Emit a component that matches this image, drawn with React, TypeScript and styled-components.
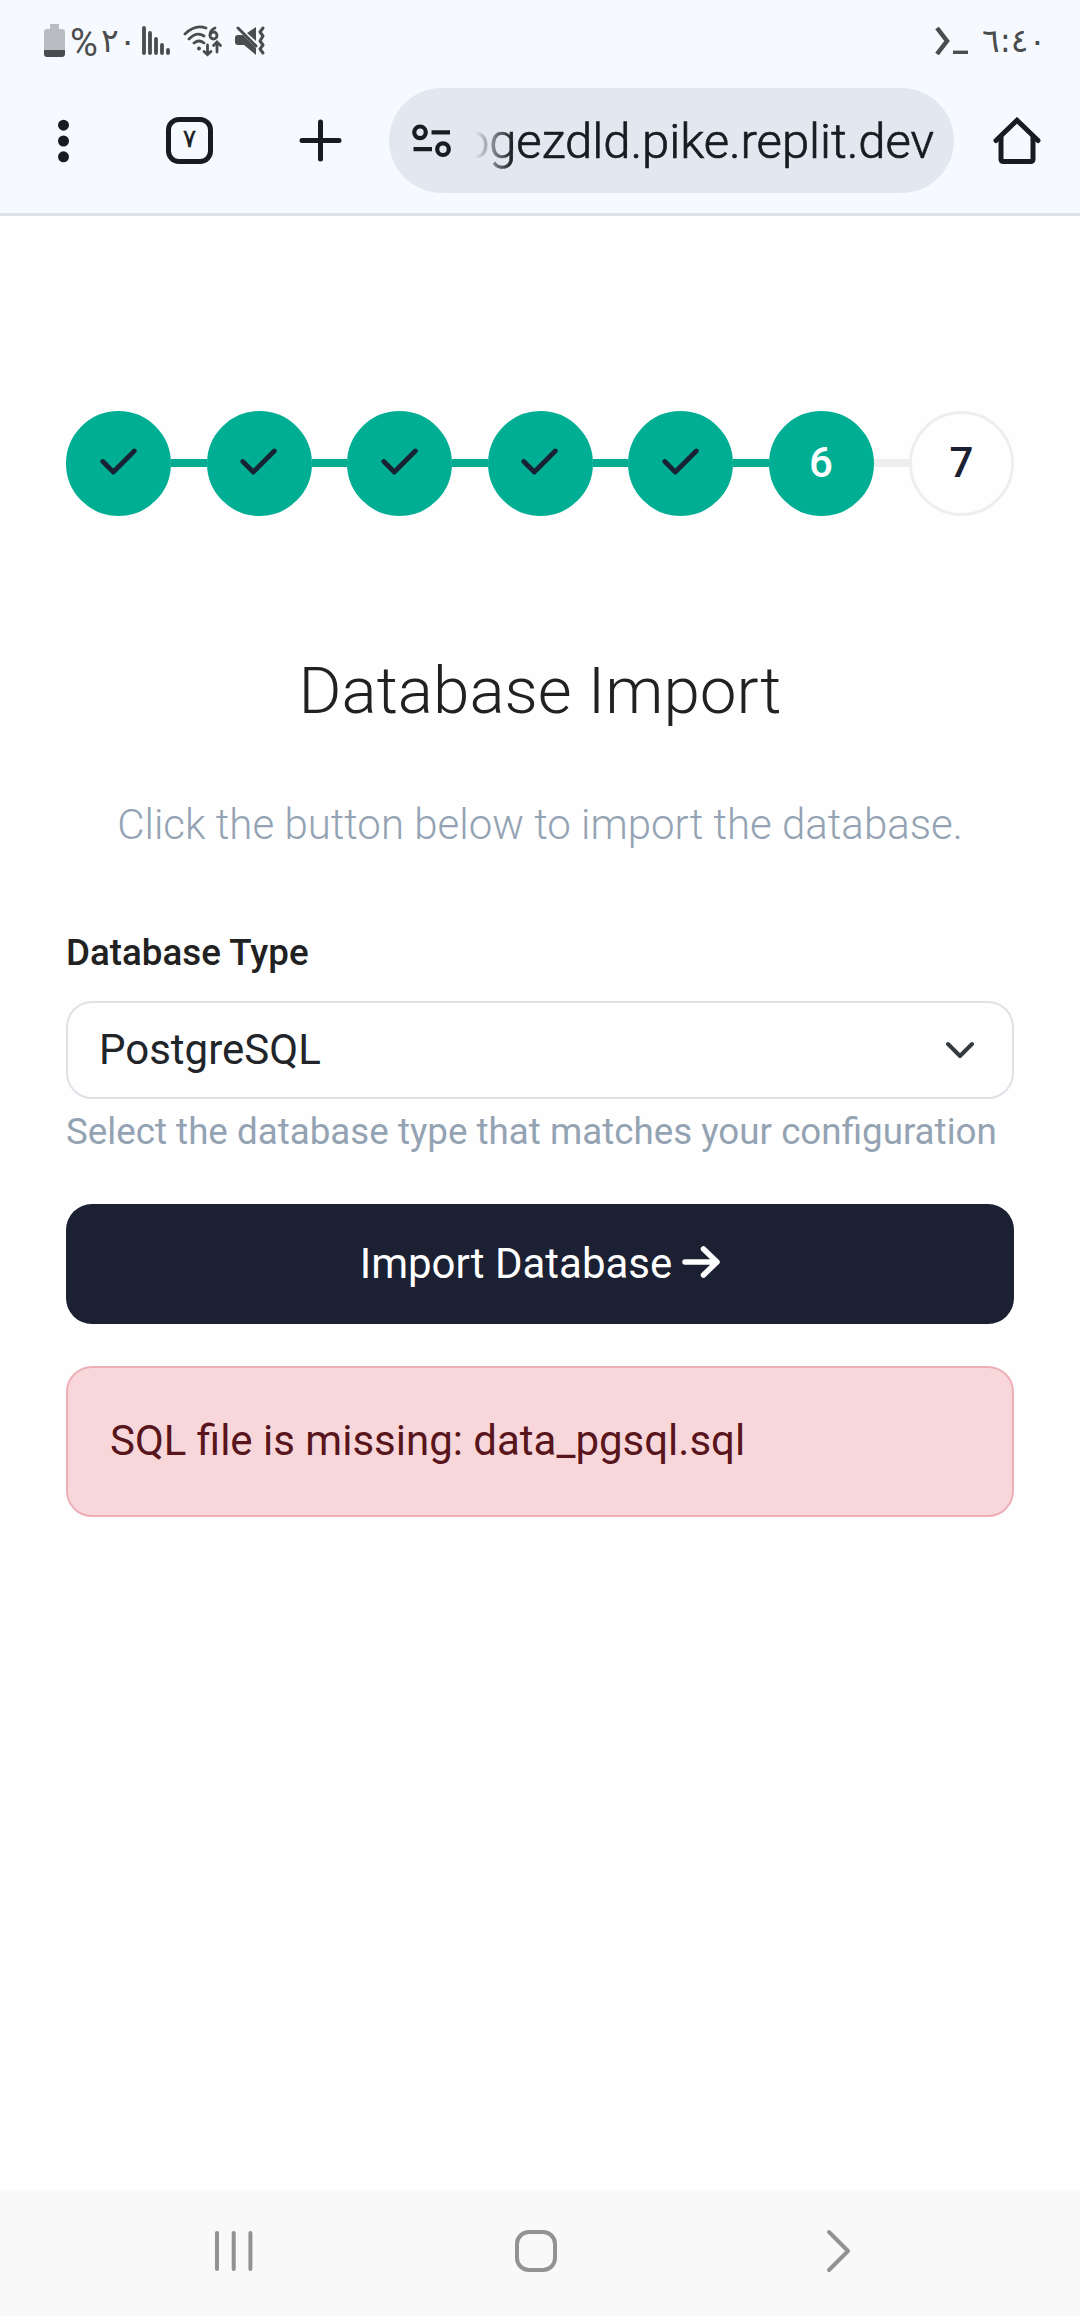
import React from "react";
import styled, { createGlobalStyle } from "styled-components";

const GlobalStyle = createGlobalStyle`
  *, *::before, *::after { box-sizing: border-box; }
  body { margin: 0; background: #fefefe; font-family: Roboto, "Liberation Sans", sans-serif; }
  h1, p { margin: 0; }
  svg { display: block; flex: none; }
`;

const Screen = styled.div`
  display: flex;
  flex-direction: column;
  width: 1080px;
  height: 2316px;
  overflow: hidden;
`;

const Header = styled.header`
  flex: none;
  height: 216px;
  background: #f6faff;
  border-bottom: 3px solid #dde3ea;
`;

const StatusBar = styled.div`
  display: flex;
  align-items: center;
  height: 82px;
  padding: 0 45px 0 44px;
  color: #4b4c4e;
`;

const StatusGroup = styled.div<{ $end?: boolean; $gap?: number; $indent?: number }>`
  display: flex;
  align-items: center;
  gap: ${(p) => p.$gap ?? 0}px;
  margin-left: ${(p) => (p.$end ? "auto" : `${p.$indent ?? 0}px`)};
`;

const Percent = styled.span`
  width: 31px;
  margin-left: 4px;
  padding-top: 3px;
  font-size: 38px;
  font-weight: 400;
  line-height: 40px;
`;

const Digits = styled.span<{ $width: number; $indent?: number }>`
  width: ${(p) => p.$width}px;
  padding-left: ${(p) => p.$indent ?? 0}px;
  font-family: "DejaVu Sans", sans-serif;
  font-size: 33px;
  line-height: 40px;
  letter-spacing: -5.5px;
  white-space: nowrap;
`;

const Toolbar = styled.div`
  display: flex;
  align-items: center;
  height: 117px;
  padding: 0 39px 0 57px;
`;

const TabCount = styled.button`
  display: flex;
  justify-content: center;
  width: 47px;
  height: 47px;
  margin: 0 86px 0 96px;
  padding: 0;
  border: 5px solid #181c20;
  border-radius: 13px;
  background: none;
  color: #181c20;
  font: 25px/33px "DejaVu Sans", sans-serif;
  -webkit-text-stroke: 0.4px #181c20;
`;

const AddressBar = styled.div`
  display: flex;
  align-items: center;
  width: 565px;
  height: 105px;
  margin: 0 39px 0 47px;
  padding: 0 20px 0 22px;
  border-radius: 53px;
  background: #e1e8f0;
`;

const Url = styled.div`
  display: flex;
  justify-content: flex-end;
  flex: 1;
  margin-left: 23px;
  padding-top: 2px;
  overflow: hidden;
  color: #181c20;
  font-size: 49px;
  font-weight: 300;
  line-height: 64px;
  letter-spacing: -0.05px;
  white-space: nowrap;
  -webkit-text-stroke: 0.7px #181c20;
  mask-image: linear-gradient(to right, transparent 0, #000 38px);
`;

const Main = styled.main`
  display: flex;
  flex: 1;
  flex-direction: column;
  padding: 195px 66px 0;
`;

const Stepper = styled.div`
  display: flex;
  align-items: center;
  height: 105px;
`;

const Step = styled.div<{ $reached: boolean }>`
  display: flex;
  flex: none;
  align-items: center;
  justify-content: center;
  width: 105px;
  height: 105px;
  border: 3px solid ${(p) => (p.$reached ? "#00ae93" : "#eeeeee")};
  border-radius: 50%;
  background: ${(p) => (p.$reached ? "#00ae93" : "#fefefe")};
  color: ${(p) => (p.$reached ? "#ffffff" : "#1b2032")};
  font-size: 42px;
  font-weight: 500;
  line-height: 50px;
  padding-bottom: 1px;
`;

const StepLine = styled.div<{ $reached: boolean }>`
  flex: 1;
  height: 8px;
  margin-bottom: 1px;
  background: ${(p) => (p.$reached ? "#05ac91" : "#eeeeee")};
`;

const Title = styled.h1`
  margin-top: 137px;
  color: #212121;
  font-size: 65.625px;
  font-weight: 300;
  line-height: 76px;
  text-align: center;
`;

const Lead = styled.p`
  margin-top: 64px;
  color: #94a3b3;
  font-size: 42px;
  font-weight: 300;
  line-height: 63px;
  text-align: center;
`;

const Label = styled.label`
  margin-top: 69px;
  color: #212121;
  font-size: 36.75px;
  font-weight: 500;
  line-height: 55px;
`;

const Select = styled.div`
  display: flex;
  align-items: center;
  justify-content: space-between;
  height: 98px;
  margin-top: 21px;
  padding: 0 38px 1px 31px;
  border: 2px solid #dee2e6;
  border-radius: 26px;
  background: #fefefe;
  color: #212529;
  font-size: 42px;
  line-height: 49px;
`;

const Hint = styled.p`
  margin-top: 5px;
  color: #94a3b3;
  font-size: 36.75px;
  line-height: 55px;
`;

const Submit = styled.button`
  display: flex;
  align-items: center;
  justify-content: center;
  gap: 10px;
  height: 120px;
  margin-top: 45px;
  padding: 0 0 2px;
  border: 0;
  border-radius: 26px;
  background: #1b2032;
  color: #ffffff;
  font-family: inherit;
  font-size: 42px;
`;

const Alert = styled.div`
  display: flex;
  align-items: center;
  height: 151px;
  margin-top: 42px;
  padding: 0 42px 2px;
  border: 2px solid #edafb6;
  border-radius: 26px;
  background: #f8d7da;
  color: #58151c;
  font-size: 42px;
`;

const NavBar = styled.nav`
  display: grid;
  flex: none;
  grid-template-columns: 42px 44px 26px;
  align-items: center;
  column-gap: 259px;
  height: 126px;
  padding: 0 0 4px 213px;
  background: #f9f9f9;
`;

const NavSvg = styled.svg<{ $nudge?: number }>`
  margin-left: ${(p) => p.$nudge ?? 0}px;
  fill: none;
  stroke: #929292;
  stroke-width: 4;
  stroke-linecap: round;
`;

const BatteryIcon = () => (
  <svg width="22" height="34" viewBox="0 0 22 34">
    <path d="M6 0h9v5h3q3 0 3 3v18H0V8q0-3 3-3h3z" fill="#b9bdc1" />
    <path d="M0 26h21v4q0 3-3 3H3q-3 0-3-3z" fill="#4b4c4e" />
  </svg>
);

const SignalIcon = () => (
  <svg width="30" height="32" viewBox="0 0 30 32" stroke="#4b4c4e" strokeWidth="3.8" strokeLinecap="round">
    <path d="M2 3v25M8 8v20M14 14v14M20 20v8M26 25v3" />
  </svg>
);

const WifiIcon = () => (
  <svg width="40" height="32" viewBox="0 0 40 32" fill="none" stroke="#4b4c4e" strokeWidth="2.8" strokeLinecap="round">
    <path d="M2 9Q12-1 23 3M6 14Q14 6 21 11M11 18Q16 14 21 18" />
    <circle cx="16" cy="23.5" r="2" fill="#4b4c4e" stroke="none" />
    <path d="M32 3Q27 5 27 10" />
    <circle cx="30.500" cy="10.500" r="3.500" />
    <path d="M24.500 20v9M21 26.500l3.500 3.200 3.500-3.200M34 27v-9M30.500 20.500l3.500-3.500 3.500 3.500" />
  </svg>
);

const MutedIcon = () => (
  <svg width="32" height="32" viewBox="0 0 32 32">
    <path d="M0 13q0-3 3-3h5l13 13v7L9 20H3q-3 0-3-3z" fill="#4b4c4e" />
    <path d="M21 2v14l-9-8z" fill="#4b4c4e" />
    <path d="M3 3l18 18" stroke="#4b4c4e" strokeWidth="3" strokeLinecap="round" />
    <path d="M28 3l-3 4 3 4-3 5 3 4-3 4 3 4" fill="none" stroke="#4b4c4e" strokeWidth="3" strokeLinecap="round" strokeLinejoin="round" />
  </svg>
);

const TerminalIcon = () => (
  <svg width="34" height="28" viewBox="0 0 34 28" fill="none" stroke="#4b4c4e">
    <path d="M2 1l10 13L2 27" strokeWidth="4.500" />
    <path d="M18 25.300h15" strokeWidth="3.400" />
  </svg>
);

const MenuIcon = () => (
  <svg width="13" height="44" viewBox="0 0 13 44" fill="#181c20">
    <circle cx="6.500" cy="6.200" r="5.500" />
    <circle cx="6.500" cy="22" r="5.500" />
    <circle cx="6.500" cy="37.800" r="5.500" />
  </svg>
);

const PlusIcon = () => (
  <svg width="43" height="43" viewBox="0 0 43 43" stroke="#181c20" strokeWidth="5" strokeLinecap="round">
    <path d="M21.500 3v37M3 21.500h37" />
  </svg>
);

const SiteSettingsIcon = () => (
  <svg width="41" height="34" viewBox="0 0 41 34" fill="none" stroke="#181c20" strokeWidth="4.200">
    <circle cx="9" cy="8.300" r="5.800" />
    <path d="M20.500 8.300H39M2.500 25.200H21" />
    <circle cx="32" cy="25.200" r="5.800" />
  </svg>
);

const HomeIcon = () => (
  <svg width="48" height="48" viewBox="0 0 48 48" fill="none" stroke="#181c20" strokeWidth="5" strokeLinecap="round" strokeLinejoin="round">
    <path d="M3 23.500L24 3.300 45 23.500" strokeLinejoin="miter" />
    <path d="M8 20v22q0 2.500 2.500 2.500h27q2.500 0 2.500-2.500V20" />
  </svg>
);

const CheckIcon = () => (
  <svg width="38" height="30" viewBox="0 0 38 30" fill="none" stroke="#182235" strokeWidth="4.800" strokeLinecap="round" strokeLinejoin="round">
    <path d="M2.800 13.500L13.300 24 34.300 3" />
  </svg>
);

const ChevronIcon = () => (
  <svg width="28" height="20" viewBox="0 0 28 20" fill="none" stroke="#343a40" strokeWidth="4" strokeLinecap="round" strokeLinejoin="round">
    <path d="M2 4l12 12L26 4" />
  </svg>
);

const ArrowIcon = () => (
  <svg width="38" height="34" viewBox="0 0 38 34" fill="none" stroke="#ffffff" strokeWidth="5.500" strokeLinecap="round" strokeLinejoin="round">
    <path d="M3 16h31M21.500 3L35 16 21.500 29" />
  </svg>
);

const CURRENT_STEP = 6;
const STEPS = [1, 2, 3, 4, 5, 6, 7];

export default function App() {
  return (
    <Screen>
      <GlobalStyle />
      <Header>
        <StatusBar>
          <StatusGroup>
            <BatteryIcon />
            <Percent>%</Percent>
            <Digits $width={41}>٢٠</Digits>
            <SignalIcon />
          </StatusGroup>
          <StatusGroup $indent={11} $gap={12}>
            <WifiIcon />
            <MutedIcon />
          </StatusGroup>
          <StatusGroup $end>
            <TerminalIcon />
            <Digits $width={66} $indent={13}>٦:٤٠</Digits>
          </StatusGroup>
        </StatusBar>
        <Toolbar>
          <MenuIcon />
          <TabCount>٧</TabCount>
          <PlusIcon />
          <AddressBar>
            <SiteSettingsIcon />
            <Url>ogezdld.pike.replit.dev</Url>
          </AddressBar>
          <HomeIcon />
        </Toolbar>
      </Header>
      <Main>
        <Stepper>
          {STEPS.map((n) => (
            <React.Fragment key={n}>
              {n > 1 && <StepLine $reached={n <= CURRENT_STEP} />}
              <Step $reached={n <= CURRENT_STEP}>{n < CURRENT_STEP ? <CheckIcon /> : n}</Step>
            </React.Fragment>
          ))}
        </Stepper>
        <Title>Database Import</Title>
        <Lead>Click the button below to import the database.</Lead>
        <Label>Database Type</Label>
        <Select>
          PostgreSQL
          <ChevronIcon />
        </Select>
        <Hint>Select the database type that matches your configuration</Hint>
        <Submit>
          Import Database
          <ArrowIcon />
        </Submit>
        <Alert>SQL file is missing: data_pgsql.sql</Alert>
      </Main>
      <NavBar>
        <NavSvg width="42" height="44" viewBox="0 0 42 44">
          <path d="M4 4v36M20.700 4v36M37.400 4v36" />
        </NavSvg>
        <NavSvg width="44" height="44" viewBox="0 0 44 44">
          <rect x="3" y="3" width="38" height="38" rx="12" />
        </NavSvg>
        <NavSvg $nudge={9} width="26" height="44" viewBox="0 0 26 44">
          <path d="M3 3l19 19L3 41" strokeLinejoin="round" />
        </NavSvg>
      </NavBar>
    </Screen>
  );
}
